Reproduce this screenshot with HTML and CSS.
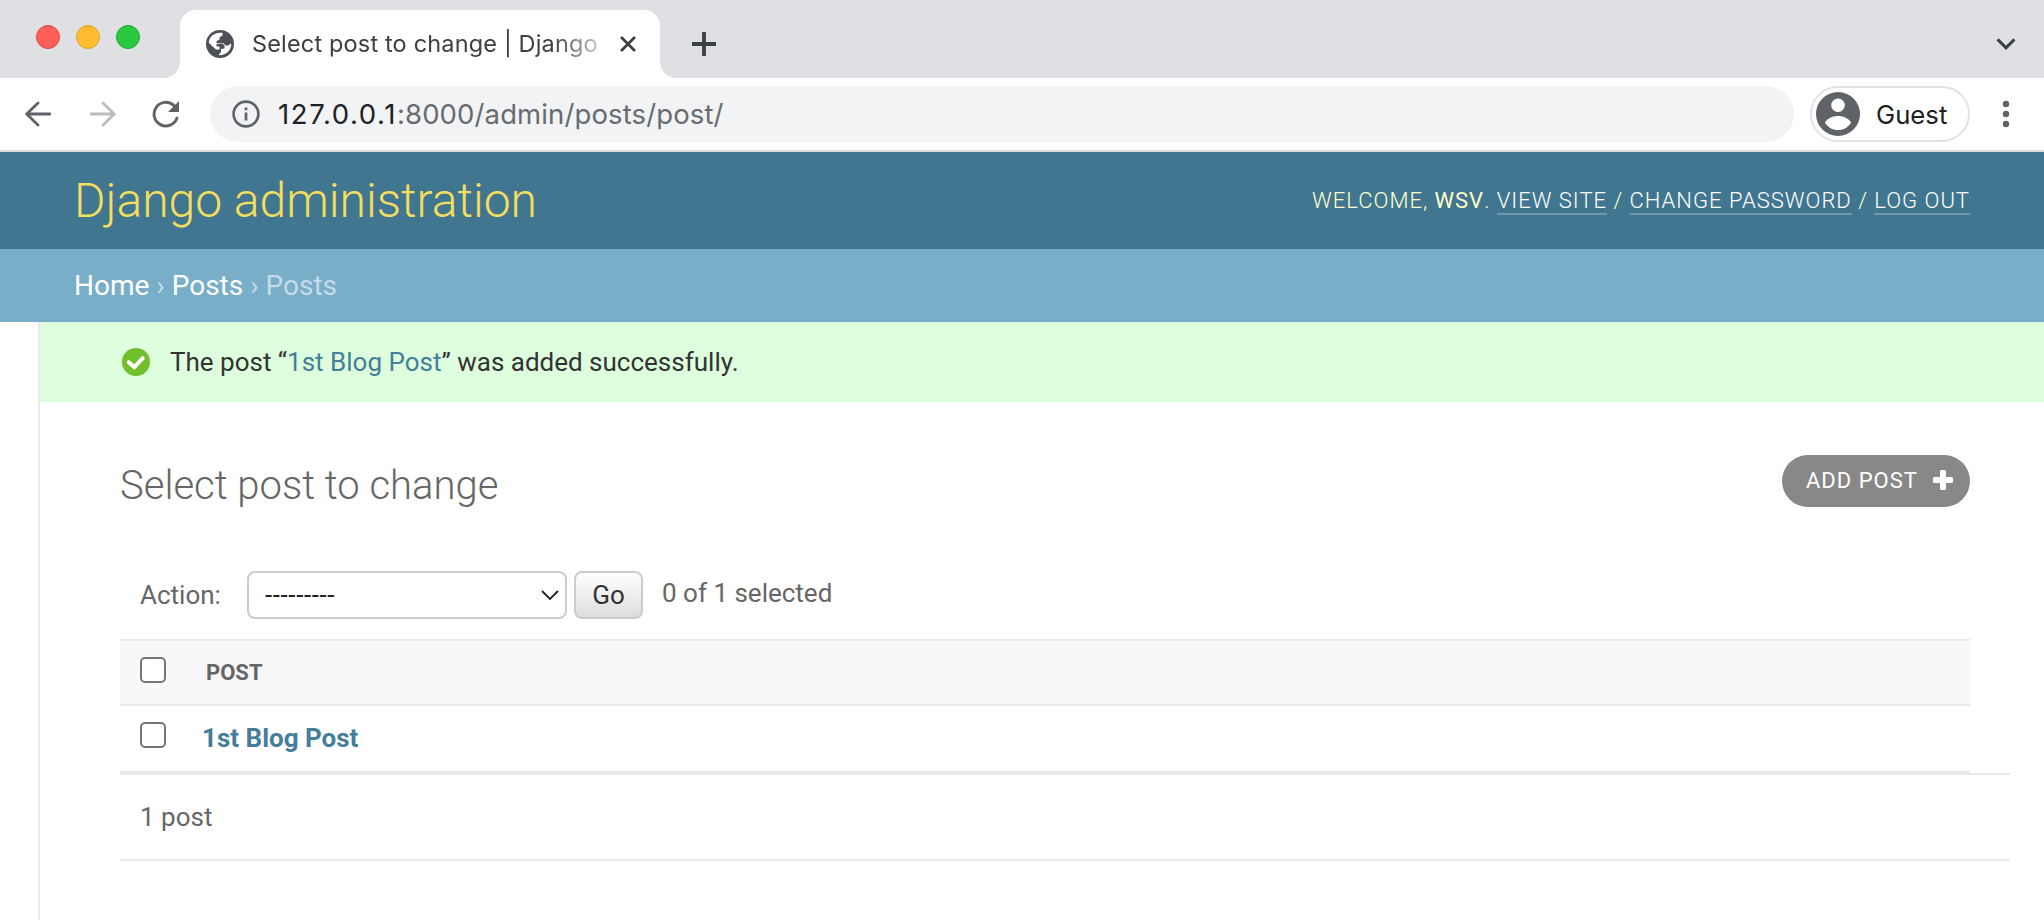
FILE: index.html
```html
<!DOCTYPE html>
<html lang="en">
<head>
    <meta charset="UTF-8">
    <meta name="viewport" content="width=device-width, initial-scale=1.0">
    <title>Select post to change | Django site admin</title>
    <link rel="stylesheet" href="styles.css">
</head>
<body>
    <div class="tabstrip">
        <div class="lights">
            <span class="light red"></span>
            <span class="light yellow"></span>
            <span class="light green"></span>
        </div>
        <div class="tab">
            <svg class="favicon" viewBox="0 0 28 28" width="28" height="28">
                <circle cx="14" cy="14" r="14" fill="#4d5156"/>
                <path d="M2.800 13 C3 7 8 2.800 14 2.800 H16.500 V5.500 L13.500 7.200 V9.800 L10.500 11 V13.300 H16 L18.500 15.500 V18.500 L15 19 V22 L12.500 25.100 C19.500 25.800 25.200 20.500 25.200 14.500 L24.500 13.500 L22.500 15.500 H19.500 L17 12.800 L16.500 13.800 L10.500 14 V16.500 H13.500 V19.500 H10 L3.500 13.500 Z" fill="#fff"/>
            </svg>
            <span class="tab-title">Select post to change | Django</span>
            <svg class="tab-close" viewBox="0 0 16 16" width="16" height="16">
                <path d="M1 1 L15 15 M15 1 L1 15" stroke="#3c4043" stroke-width="2.8"/>
            </svg>
        </div>
        <svg class="new-tab" viewBox="0 0 24 24" width="24" height="24">
            <path d="M12 0 V24 M0 12 H24" stroke="#3c4043" stroke-width="3.8"/>
        </svg>
        <svg class="tab-search" viewBox="0 0 20 12" width="20" height="12">
            <path d="M1.6 1.4 L10 9.8 L18.4 1.4" fill="none" stroke="#3c4043" stroke-width="3"/>
        </svg>
    </div>

    <div class="toolbar">
        <svg class="back" viewBox="0 0 26 26" width="26" height="26">
            <path d="M25 13 H2 M13 2 L1.7 13 L13 24" fill="none" stroke="#5f6368" stroke-width="2.8" stroke-linecap="round"/>
        </svg>
        <svg class="forward" viewBox="0 0 26 26" width="26" height="26">
            <path d="M1 13 H24 M13 2 L24.3 13 L13 24" fill="none" stroke="#babcbe" stroke-width="2.8" stroke-linecap="round"/>
        </svg>
        <svg class="reload" viewBox="0 0 28 28" width="28" height="28">
            <path d="M25 18 A11.800 11.800 0 1 1 22 5.600" fill="none" stroke="#5f6368" stroke-width="2.9" stroke-linecap="round"/>
            <path d="M27 1 V12 H16 Z" fill="#5f6368"/>
        </svg>
        <div class="omnibox">
            <svg viewBox="0 0 28 28" width="28" height="28">
                <circle cx="14" cy="14" r="12.4" fill="none" stroke="#5f6368" stroke-width="2.6"/>
                <path d="M14 12.5 V20.5 M14 7.6 V10.3" stroke="#5f6368" stroke-width="2.7"/>
            </svg>
            <span class="url"><span class="host">127.0.0.1</span>:8000/admin/posts/post/</span>
        </div>
        <div class="profile">
            <svg viewBox="0 0 44 44" width="44" height="44">
                <circle cx="22" cy="22" r="22" fill="#5f6368"/>
                <circle cx="22" cy="13.3" r="6.8" fill="#fff"/>
                <path d="M8.8 30.5 C12 26 17 24 22 24 C27 24 32 26 35.2 30.5 C32 35.5 27.5 38 22 38 C16.5 38 12 35.5 8.8 30.5 Z" fill="#fff"/>
            </svg>
            <span>Guest</span>
        </div>
        <svg class="kebab" viewBox="0 0 8 28" width="8" height="28">
            <circle cx="4" cy="4" r="3.2" fill="#5f6368"/>
            <circle cx="4" cy="14" r="3.2" fill="#5f6368"/>
            <circle cx="4" cy="24" r="3.2" fill="#5f6368"/>
        </svg>
    </div>

    <div id="header">
        <h1 class="site-name">Django administration</h1>
        <div class="user-tools">
            Welcome, <strong>WSV</strong>.
            <a>View site</a> / <a>Change password</a> / <a>Log out</a>
        </div>
    </div>

    <div class="breadcrumbs"><a>Home</a> &rsaquo; <a>Posts</a> &rsaquo; Posts</div>

    <div class="main">
        <div class="success">
            <svg viewBox="0 0 28 28" width="28" height="28">
                <circle cx="14" cy="14" r="14" fill="#70bf2b"/>
                <path d="M6.8 14.2 L12.3 19.2 L20.8 10.2" fill="none" stroke="#fff" stroke-width="4" stroke-linecap="round"/>
            </svg>
            <span>The post “<a>1st Blog Post</a>” was added successfully.</span>
        </div>

        <div class="content">
            <div class="content-head">
                <h2>Select post to change</h2>
                <a class="addlink"><span>Add post</span>
                    <svg viewBox="0 0 20 20" width="20" height="20">
                        <path d="M8.5 0 H11.5 Q13 0 13 1.5 V7 H18.5 Q20 7 20 8.5 V11.5 Q20 13 18.5 13 H13 V18.5 Q13 20 11.5 20 H8.5 Q7 20 7 18.5 V13 H1.5 Q0 13 0 11.5 V8.5 Q0 7 1.5 7 H7 V1.5 Q7 0 8.5 0 Z" fill="#fff"/>
                    </svg>
                </a>
            </div>

            <div class="actions">
                <label>Action:</label>
                <div class="select">
                    <span>---------</span>
                    <svg viewBox="0 0 18 10" width="18" height="10">
                        <path d="M1 1 L9 9 L17 1" fill="none" stroke="#222" stroke-width="1.8"/>
                    </svg>
                </div>
                <button class="go">Go</button>
                <span class="counter">0 of 1 selected</span>
            </div>

            <div class="results">
                <div class="row head">
                    <span class="checkbox"></span>
                    <span class="column">Post</span>
                </div>
                <div class="row">
                    <span class="checkbox"></span>
                    <a class="post-link">1st Blog Post</a>
                </div>
            </div>
            <div class="paginator">1 post</div>
        </div>
    </div>
</body>
</html>
```
FILE: styles.css
```css
* {
    box-sizing: border-box;
}
body {
    margin: 0;
    height: 920px;
    display: flex;
    flex-direction: column;
    overflow: hidden;
    background: #fff;
    color: #333;
    font-family: Roboto, "Liberation Sans", sans-serif;
    font-size: 26px;
    white-space: nowrap;
}
svg {
    display: block;
    flex: none;
}

/* browser window */
.tabstrip {
    display: flex;
    align-items: center;
    height: 78px;
    padding-top: 10px;
    background: #dfe0e4;
    font-family: Inter, sans-serif;
}
.lights {
    display: flex;
    gap: 16px;
    padding: 0 40px 14px 36px;
}
.light {
    width: 24px;
    height: 24px;
    border-radius: 50%;
}
.red {
    background: #ff5f57;
    border: 1px solid #e2463f;
}
.yellow {
    background: #febc2e;
    border: 1px solid #e1a325;
}
.green {
    background: #28c840;
    border: 1px solid #1dad2b;
}
.tab {
    position: relative;
    display: flex;
    align-items: center;
    width: 480px;
    height: 68px;
    padding: 0 24px 0 26px;
    background: #fff;
    border-radius: 16px 16px 0 0;
}
.tab::before,
.tab::after {
    content: "";
    position: absolute;
    bottom: 0;
    width: 16px;
    height: 16px;
}
.tab::before {
    left: -16px;
    background: radial-gradient(circle at 0 0, transparent 15.5px, #fff 16px);
}
.tab::after {
    right: -16px;
    background: radial-gradient(circle at 100% 0, transparent 15.5px, #fff 16px);
}
.tab-title {
    width: 350px;
    margin-left: 18px;
    padding-bottom: 2px;
    overflow: hidden;
    color: #3c4043;
    font-size: 23.5px;
    letter-spacing: 0.16px;
    -webkit-mask-image: linear-gradient(to right, #000 300px, transparent 365px);
    mask-image: linear-gradient(to right, #000 300px, transparent 365px);
}
.tab-close {
    margin-left: auto;
    margin-right: 0;
}
.new-tab {
    margin-left: 32px;
}
.tab-search {
    margin-left: auto;
    margin-right: 28px;
}
.toolbar {
    display: flex;
    align-items: center;
    height: 74px;
    padding: 0 34px 0 25px;
    border-bottom: 2px solid #dadcde;
    font-family: Inter, sans-serif;
}
.forward {
    margin-left: 39px;
}
.reload {
    margin: 0 30px 0 36px;
}
.omnibox {
    display: flex;
    align-items: center;
    flex: 1;
    height: 56px;
    padding-left: 22px;
    border-radius: 28px;
    background: #f1f3f4;
}
.url {
    margin-left: 18px;
    color: #686b6f;
    font-size: 27.5px;
    letter-spacing: 0.12px;
}
.host {
    color: #202124;
    letter-spacing: 1.6px;
}
.profile {
    display: flex;
    align-items: center;
    width: 160px;
    height: 56px;
    margin: 0 32px 0 16px;
    padding-left: 4px;
    border: 2px solid #e1e2e4;
    border-radius: 28px;
    color: #202124;
    font-size: 25.7px;
}
.profile span {
    margin-left: 16px;
}

/* django admin */
#header {
    display: flex;
    align-items: center;
    justify-content: space-between;
    height: 97px;
    padding: 0 74px 0 74px;
    background: #417690;
    color: #ffc;
}
.site-name {
    margin: 0;
    color: #f5dd5d;
    font-size: 48px;
    font-weight: 300;
}
.user-tools {
    font-size: 22px;
    font-weight: 300;
    letter-spacing: 1px;
    text-transform: uppercase;
}
.user-tools a {
    border-bottom: 2px solid rgba(255, 255, 255, 0.25);
    color: #fff;
}
.breadcrumbs {
    height: 73px;
    padding-left: 74px;
    background: #79aec8;
    color: #c4dce8;
    font-size: 28px;
    line-height: 73px;
}
.breadcrumbs a {
    color: #fff;
}
.main {
    flex: 1;
    margin-left: 38px;
    border-left: 2px solid #eaeaea;
}
.success {
    display: flex;
    align-items: center;
    gap: 20px;
    height: 80px;
    padding-left: 82px;
    background: #dfd;
}
.success a {
    color: #447e9b;
}
.content {
    padding: 53px 34px 0 80px;
    color: #666;
}
.content-head {
    display: flex;
    align-items: flex-start;
    justify-content: space-between;
    height: 116px;
    margin-right: 40px;
}
.content-head h2 {
    margin: 7px 0 0;
    font-size: 40px;
    font-weight: 300;
}
.addlink {
    display: flex;
    align-items: center;
    justify-content: space-between;
    width: 188px;
    height: 52px;
    padding: 0 17px 2px 24px;
    border-radius: 26px;
    background: #888;
    color: #fff;
    font-size: 22px;
    letter-spacing: 1px;
    text-transform: uppercase;
}
.actions {
    display: flex;
    align-items: center;
    height: 48px;
    margin-bottom: 20px;
    padding-left: 20px;
}
.actions label {
    width: 107px;
}
.select {
    display: flex;
    align-items: center;
    justify-content: space-between;
    width: 320px;
    height: 48px;
    padding: 0 6px 0 16px;
    border: 2px solid #ccc;
    border-radius: 8px;
    color: #222;
}
.select span {
    letter-spacing: 0.6px;
}
.go {
    width: 69px;
    height: 48px;
    margin: 0 19px 0 7px;
    padding: 0;
    border: 2px solid #ccc;
    border-radius: 8px;
    background: linear-gradient(#fff, #ddd);
    color: #333;
    font: inherit;
}
.counter {
    padding-bottom: 4px;
}
.results {
    margin-right: 40px;
    border-top: 2px solid #e8e8e8;
}
.row {
    display: flex;
    align-items: flex-start;
    height: 67px;
    padding: 16px 20px 0;
    border-bottom: 2px solid #e8e8e8;
}
.head {
    height: 65px;
    background: #f8f8f8;
}
.checkbox {
    width: 26px;
    height: 26px;
    border: 2px solid #767676;
    border-radius: 5px;
    background: #fff;
}
.column {
    margin: 3px 0 0 40px;
    font-size: 22px;
    font-weight: 700;
    text-transform: uppercase;
}
.post-link {
    margin: 1px 0 0 36px;
    color: #447e9b;
    font-weight: 700;
}
.paginator {
    height: 88px;
    padding-left: 20px;
    border-top: 2px solid #e8e8e8;
    border-bottom: 2px solid #e8e8e8;
    line-height: 84px;
}
```
